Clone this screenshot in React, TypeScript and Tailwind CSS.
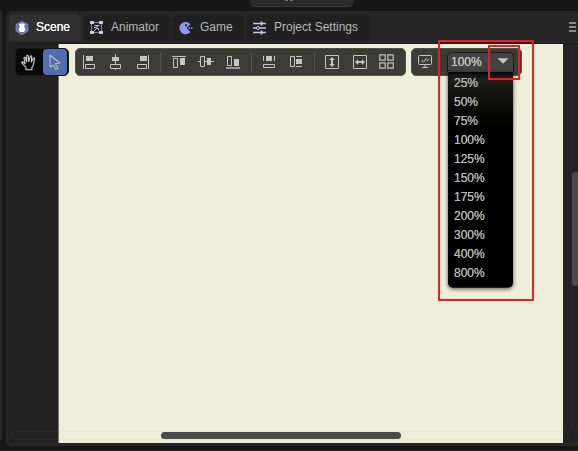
import type { ReactNode } from "react";

const zoomLevels = ["25%", "50%", "75%", "100%", "125%", "150%", "175%", "200%", "300%", "400%", "800%"];

function Icon({ children, size = 16 }: { children: ReactNode; size?: number }) {
  return (
    <svg width={size} height={size} viewBox={`0 0 ${size} ${size}`} fill="none" stroke="#c4c4c2" className="block shrink-0">
      {children}
    </svg>
  );
}

function Tab({ label, icon, className }: { label: string; icon: ReactNode; className: string }) {
  return (
    <div className={`flex h-[27px] shrink-0 items-center rounded-t-md pl-[5px] ${className}`}>
      <div className="w-[22px]">{icon}</div>
      <span className="h-[27px] whitespace-nowrap leading-[26px]">{label}</span>
    </div>
  );
}

function SceneIcon() {
  return (
    <Icon>
      <path d="M8 1.5 13.8 4.5V11L8 14.6 2.2 11V4.5Z" fill="#6571ad" stroke="#8790bd" strokeWidth="1" strokeLinejoin="round" />
      <path d="M5 4.2 6.5 3.5h3l1.5.7-.8 2L11.5 9.5 10 12H6L4.5 9.5l1.3-3.3Z" fill="#fff" stroke="none" />
    </Icon>
  );
}

function AnimatorIcon() {
  return (
    <Icon>
      <path d="M1 1h4v3H1zM10 1h4v3h-4zM1 11h4v3H1zM10 11h4v3h-4z" fill="#c4c9ef" stroke="none" />
      <path d="M5 2.5h5M5 12.5h5M2.5 4v7M12.5 4v7" stroke="#7d81a3" />
      <path d="M5.5 5.5h5M8.5 5.5 7.5 8.5 5 11M7.5 8.5h2v2M5 7.5h2.5" stroke="#c4c9ef" />
    </Icon>
  );
}

function GameIcon() {
  return (
    <Icon>
      <path d="M12.5 4.2 8.5 8l4 4A6.2 6.2 0 1 1 12.5 4.2Z" fill="#9299f2" stroke="none" />
      <path d="M7 4.2h2v2H7z" fill="#24253a" stroke="none" />
      <path d="M10.5 7.2h1.7v1.7h-1.7zM13.2 7.2h1.3v1.7h-1.3z" fill="#8990df" stroke="none" />
    </Icon>
  );
}

function SettingsIcon() {
  return (
    <Icon>
      <path d="M1 3.5h13M1 8h4M7 8h7M1 12.5h13" stroke="#c1c5ef" strokeWidth="1.3" />
      <path d="M9.5 1.5v4M9.5 10.5v4" stroke="#c1c5ef" strokeWidth="1.8" />
      <circle cx="6" cy="8" r="1.5" stroke="#c1c5ef" />
    </Icon>
  );
}

const alignGroups = [
  {
    className: "gap-[11px] pr-[9px]",
    icons: [
      <Icon key="l"><path d="M2.5 1v14M4.5 10.5h9v4h-9z" /><path d="M5 2h7v5H5z" fill="#c4c4c2" stroke="none" /></Icon>,
      <Icon key="c"><path d="M7.5 0v3M7.5 7v3M7.5 14v2M2.5 10.5h10v4h-10z" /><path d="M4 3h7v4H4z" fill="#c4c4c2" stroke="none" /></Icon>,
      <Icon key="r"><path d="M13.5 1v14M2.5 10.5h9v4h-9z" /><path d="M5 2h7v5H5z" fill="#c4c4c2" stroke="none" /></Icon>,
    ],
  },
  {
    className: "gap-[11px] pl-[10px] pr-[10px]",
    icons: [
      <Icon key="t"><path d="M1 2.5h14M2.5 4.5h4v9h-4z" /><path d="M9 4h5v7H9z" fill="#c4c4c2" stroke="none" /></Icon>,
      <Icon key="m"><path d="M0 7.5h3M7 7.5h2M13 7.5h3M2.5 2.5h4v10h-4z" /><path d="M9 4h4v7H9z" fill="#c4c4c2" stroke="none" /></Icon>,
      <Icon key="b"><path d="M1 14h14" strokeWidth="1.4" /><path d="M2.5 2.5h4v9h-4z" /><path d="M9 5h5v7H9z" fill="#c4c4c2" stroke="none" /></Icon>,
    ],
  },
  {
    className: "gap-[11px] pl-[9px] pr-[10px]",
    icons: [
      <Icon key="v"><path d="M2.5 2v5M13.5 2v5M2.5 10.5h11v3h-11z" /><path d="M5 2h6v5H5z" fill="#c4c4c2" stroke="none" /></Icon>,
      <Icon key="h"><path d="M2.5 2.5h4v10h-4zM8 2.5h6M8 12.5h6" /><path d="M8 5h6v5H8z" fill="#c4c4c2" stroke="none" /></Icon>,
    ],
  },
  {
    className: "gap-[11px] pl-[9px]",
    icons: [
      <Icon key="sv"><path d="M1.5 1.5h13v13h-13z" /><path d="m8 3 2.8 3H9v4h1.8L8 13l-2.8-3H7V6H5.2Z" fill="#c4c4c2" stroke="none" /></Icon>,
      <Icon key="sh" size={17}><path d="M2.5 1.5h13v13h-13z" /><path d="m4 8 3-2.8V7h4V5.2L14 8l-3 2.8V9H7v1.8Z" fill="#c4c4c2" stroke="none" /></Icon>,
      <Icon key="g"><path d="M.8.8h5.4v5.4H.8zM8.8.8h5.4v5.4H8.8zM.8 8.8h5.4v5.4H.8zM8.8 8.8h5.4v5.4H8.8z" strokeWidth="1.2" /></Icon>,
    ],
  },
];

function ToolModes() {
  return (
    <div className="flex h-7 w-[54px] rounded-[5px] border border-[#171a18] bg-[#090909]">
      <div className="flex w-[27px] items-center justify-center pr-[2px]">
        <svg width="16" height="17" viewBox="0 0 16 17" fill="none" stroke="#d0d0d0" strokeWidth="1.1" strokeLinejoin="round" strokeLinecap="round">
          <path d="M5 15.7v-2.2L1.1 9.2Q.5 8.1 1.6 7.8l2.6 2L3 4.3Q3 3 4.1 3.3l1.7 4.4L5.7 2Q6.4.7 7.3 1.9l.5 5.6L9.3 2.1q1-.8 1.4.3L10.3 8l2-3.8q1.3-.5 1.3.6L12.5 10q-.4 2.3-1.6 3.5v2.2Z" />
        </svg>
      </div>
      <div className="flex w-[24px] items-center justify-center rounded bg-[#506eae]">
        <svg width="14" height="17" viewBox="0 0 14 17" fill="none" stroke="#b5bbc8" strokeWidth="1.1" strokeLinejoin="round">
          <path d="m2 1 10 8.2-4.8.4 2.8 4.6-2.2 1.1L5.2 11 2 13.3Z" />
        </svg>
      </div>
    </div>
  );
}

function AlignmentBar() {
  return (
    <div className="ml-[6px] flex h-7 w-[331px] items-center rounded-[5px] border border-[#51534b] bg-[#3b3c35] pl-[5px]">
      {alignGroups.map((group, i) => (
        <div key={i} className="flex items-center">
          {i > 0 && <div className="h-5 w-px bg-[#55564f]" />}
          <div className={`flex ${group.className}`}>{group.icons}</div>
        </div>
      ))}
    </div>
  );
}

function ZoomBar() {
  return (
    <div className="ml-[5px] flex h-7 w-[111px] rounded-[5px] border border-[#51534b] bg-[#3b3c35]">
      <div className="flex w-[35px] items-center pl-[5px]">
        <Icon>
          <rect x="1.5" y="1.5" width="13" height="9" rx="1" />
          <path d="M8 11v3M5 13.5h6M4.5 8 6 6M6.5 8.5l3-4.5M10 7l2-2.5" />
        </Icon>
      </div>
      <div className="relative mt-[3px] h-[22px] w-[67px]">
        <div className="flex h-5 items-start rounded-t-[5px] border border-b-0 border-[#1e1f1d] bg-[#434343] pl-[3px] text-[#c5c5c5]">
          <span className="w-[46px] leading-[18px] [text-shadow:0_0_0.4px_#c5c5c5]">100%</span>
          <svg width="12" height="6" viewBox="0 0 12 6" className="mt-[5px]"><path d="M.5.3h11L6 5.7Z" fill="#c5c5c5" /></svg>
        </div>
        <div className="absolute left-[1px] top-[20px] h-[216px] w-[65px] rounded-b-[5px] border-b border-[#252525] bg-[linear-gradient(#000_0,#10110f_2px,#20211d_7px,#151612_20px,#060605_42px,#000_60px)] pt-[2px] text-[#b8b8b8] shadow-[0_1px_4px_rgba(0,0,0,0.65)] [text-shadow:0_0_0.4px_#b8b8b8]">
          {zoomLevels.map((level) => <div key={level} className="h-[19px] pl-[6px] leading-[19px]">{level}</div>)}
        </div>
      </div>
    </div>
  );
}

export default function App() {
  return (
    <div className="flex h-[451px] w-[578px] flex-col overflow-hidden bg-[#171717] font-['Liberation_Sans',Arial,sans-serif] text-xs text-[#b7b7b7]">
      <header className="flex h-[11px] shrink-0 pl-[250px]">
        <div className="flex h-[7px] w-[104px] justify-center gap-[2px] rounded-b-md border-b border-[#383838] bg-[#2b2b2b] pr-[26px]">
          <span className="h-px w-[3px] bg-[#777]" /><span className="h-px w-[3px] bg-[#777]" />
        </div>
      </header>
      <div className="flex h-[435px] shrink-0">
        <aside className="mb-[6px] mr-1 w-[2px] rounded-r-sm bg-[#292929]" />
        <main className="w-[572px] shrink-0 rounded-l-md border-b border-[#2b2e2b] bg-[#262626] pl-[2px]">
          <nav className="flex h-[33px] gap-[3px] border-b border-[#1a1a1a] pl-[1px] pt-[3px]">
            <Tab label="Scene" icon={<SceneIcon />} className="w-[72px] bg-[#303030] text-white [text-shadow:0_0_0.4px_#fff]" />
            <Tab label="Animator" icon={<AnimatorIcon />} className="w-[86px] bg-[#202020]" />
            <Tab label="Game" icon={<GameIcon />} className="w-[71px] bg-[#202020]" />
            <Tab label="Project Settings" icon={<SettingsIcon />} className="w-[122px] bg-[#202020]" />
            <div className="ml-auto mr-[2px] mt-[8px] flex w-[7px] flex-col gap-[2px]">
              <span className="h-[2px] bg-[#888]" /><span className="h-[2px] bg-[#888]" /><span className="h-[2px] bg-[#888]" />
            </div>
          </nav>
          <section className="relative flex h-[399px]">
            <div className="w-[51px] border-r border-[#777870] bg-[#222222]" />
            <div className="w-[504px] bg-[#efeed8]" />
            <div className="flex flex-1 justify-end bg-[#222222]">
              <div className="mt-[2px] h-[382px] w-[7px] rounded-l border border-r-0 border-[#2b2b2b] pt-[125px]">
                <div className="h-[114px] w-[7px] rounded-full bg-[#4b4b4b]" />
              </div>
            </div>
            <div className="absolute left-[7px] top-[4px] flex">
              <ToolModes />
              <AlignmentBar />
              <ZoomBar />
            </div>
            <div className="absolute bottom-[3px] left-[3px] flex h-[9px] w-[558px] rounded-full border border-[#88888812] pl-[149px]">
              <div className="h-[7px] w-[240px] rounded-full bg-[#4a4a4a]" />
            </div>
            <div className="absolute left-[430px] top-[-4px] h-[261px] w-[96px] border-2 border-[#ed1c24]" />
            <div className="absolute left-[480px] top-[1px] h-[35px] w-[32px] border-2 border-[#ed1c24]" />
          </section>
        </main>
      </div>
      <footer className="mt-1 h-px shrink-0 bg-[#292929]" />
    </div>
  );
}
